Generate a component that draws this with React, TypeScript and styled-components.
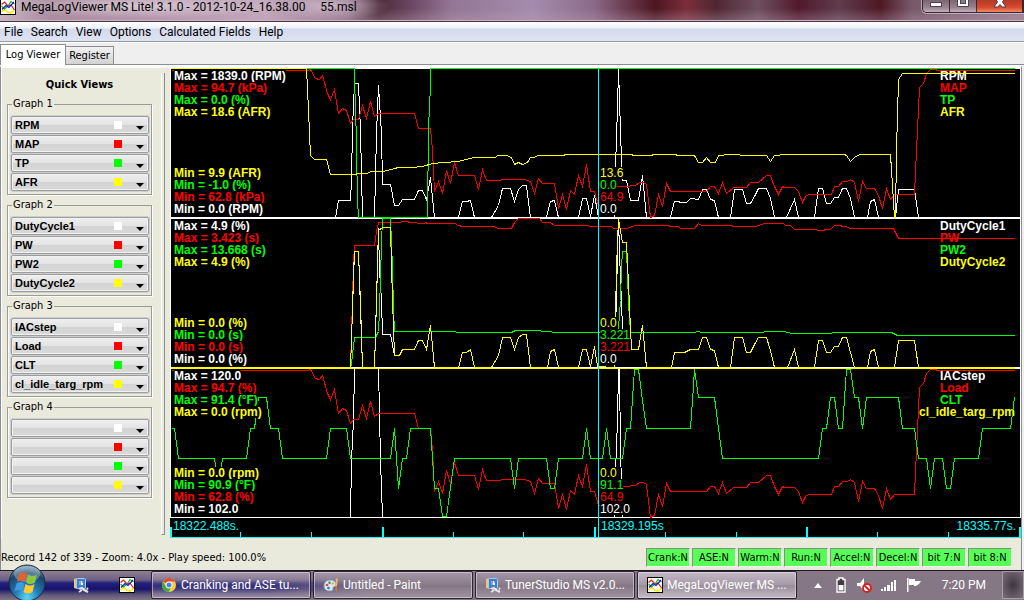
import React from 'react';
import styled, { createGlobalStyle } from 'styled-components';

const WHITE = '#ffffff';
const RED = '#ff0000';
const GREEN = '#00ff00';
const YELLOW = '#ffff00';
const CYAN = '#00ffff';
const PANEL = '#e9e9dc';
const UI_FONT = 'Roboto, "Open Sans", sans-serif';
const DIALOG_FONT = '"DejaVu Sans Condensed", "DejaVu Sans", sans-serif';
const PLOT_FONT = '"Liberation Sans", Arial, sans-serif';

const GlobalStyle = createGlobalStyle`
  * { box-sizing: border-box; }
  body { margin: 0; background: #efefef; }
  button, select { font: inherit; color: inherit; }
`;

/* ---------- log data ---------- */

interface Series {
  name: string;
  color: string;
  max: string;
  min: string;
  value: string;
  points: string;
  shift?: number;
}

interface GraphData {
  id: string;
  top: number;
  series: Series[];
}

const manifold =
  '171,70 307,70 310,69 315,78 319,79 322,75 327,93 330,99 334,89 338,113 342,108 346,110 350,123 353,119 358,119 362,105 366,118 370,101 374,116 378,113 414,113 418,128 430,128 432,150 434,191 438,181 442,193 446,170 450,183 454,162 458,175 474,175 478,189 482,169 486,180 500,180 501,179 524,179 530,181 534,193 538,178 542,183 554,183 558,208 562,194 566,209 570,190 574,194 578,175 582,186 586,164 590,191 594,191 598,205 602,205 610,186 625,186 635,185 639,182 643,182 646,184 650,217 654,215 658,194 662,206 666,183 670,191 706,191 710,186 714,186 718,193 722,182 726,193 733,187 746,187 750,182 758,182 766,175 770,175 774,186 778,194 782,186 784,187 794,187 798,191 802,202 805,196 808,194 831,194 834,186 838,186 842,181 847,181 850,179 854,182 858,201 862,181 866,188 874,188 878,195 882,208 886,188 890,199 894,194 914,194 916,150 919,87 923,83 926,73 930,69 935,69 937,70 1014,70';

const rpm =
  '335,217 338,200 350,200 351,180 352,127 354,83 358,83 360,130 362,217 374,217 376,133 378,85 381,133 382,184 390,184 394,205 398,205 402,199 414,199 418,190 422,190 426,199 430,177 434,217 458,217 462,201 466,201 470,200 474,217 491,217 498,205 502,188 510,188 514,201 518,189 522,185 526,185 530,217 546,217 550,201 554,200 558,217 578,217 582,198 586,198 590,216 594,195 597,211 598,217 614,217 615,167 617,107 618,69 619,100 621,160 622,180 626,180 630,200 638,200 642,175 646,217 670,217 674,201 678,201 680,202 686,202 690,198 698,199 702,189 706,189 710,199 714,200 718,217 730,217 734,189 742,189 746,203 750,203 754,196 758,188 766,188 770,198 774,217 786,217 794,199 798,217 814,217 818,188 822,188 826,203 830,203 834,197 838,197 842,188 846,188 850,198 854,217 867,217 870,201 874,199 878,217 895,217 898,189 914,189 918,217';

const throttle = '171,68 354,68 354,86 355,100 357,200 358,217 427,217 428,127 430,86 430,68 1014,68';

const afr =
  '171,68 306,68 307,88 310,155 314,159 326,159 330,174 355,174 357,173 367,173 370,171 382,171 395,168 397,167 411,167 422,166 432,163 444,162 458,161 473,157 495,157 497,155 506,155 511,157 514,164 518,162 522,164 527,162 530,157 534,157 537,155 563,155 565,154 631,154 633,155 651,155 653,154 675,154 677,155 694,155 698,162 702,162 706,157 710,162 715,162 718,155 723,155 724,154 739,154 740,155 766,155 770,161 774,155 779,155 780,154 844,154 846,155 850,161 855,156 860,154 890,154 894,217 895,217 896,150 898,79 902,73 1014,73';

const pw =
  '350,367 351,333 352,300 353,263 354,245 374,245 376,231 378,222 400,222 401,221 407,221 409,222 416,222 417,223 424,223 425,222 427,223 455,223 457,225 463,226 494,226 497,228 511,228 514,222 518,218 539,218 542,222 550,222 554,225 588,225 589,226 611,226 613,228 626,228 629,227 635,225 668,225 670,226 678,226 680,228 694,228 698,223 701,225 731,225 733,226 755,226 764,223 783,223 785,225 790,225 794,229 816,229 817,230 823,230 825,229 830,229 834,225 840,225 842,226 846,226 849,228 893,228 898,238 1014,238';

const pw2 =
  '350,367 351,363 354,337 375,337 378,331 379,310 380,277 381,243 382,218 390,218 392,267 393,310 394,331 455,331 456,332 511,332 515,330 540,330 541,331 551,331 552,332 618,332 618,328 620,300 621,267 622,251 626,251 627,273 628,303 630,332 695,332 696,331 699,331 700,332 763,332 764,331 783,331 792,333 831,333 832,332 891,332 897,335 1014,335';

const duty1 =
  '350,367 354,251 358,251 362,367 374,367 378,228 379,270 381,300 382,334 390,334 394,355 399,355 402,349 414,349 418,340 422,340 426,349 430,325 434,367 614,367 618,218 619,250 620,280 621,300 622,330 626,349';

const duty2 =
  '171,367 350,367 352,310 353,273 354,251 358,251 360,303 362,367 374,367 376,300 378,230 382,227 390,227 392,300 394,355 399,355 402,349 414,349 418,340 422,340 426,349 430,325 434,367 458,367 462,352 466,352 470,349 474,367 491,367 498,355 502,337 510,337 514,349 518,337 522,334 526,334 530,367 547,367 550,351 554,349 558,367 578,367 582,349 586,349 590,366 594,346 597,366 614,367 615,316 616,267 618,218 620,230 622,242 626,242 628,283 630,328 631,349 638,349 642,325 646,367 671,367 674,352 684,352 690,349 698,349 702,337 706,337 710,349 714,350 718,367 730,367 734,337 742,337 746,352 750,352 754,344 758,337 766,337 770,350 774,367 787,367 794,349 798,367 814,367 818,340 822,340 826,352 830,352 834,346 838,346 842,337 846,337 850,352 854,367 867,367 870,351 874,349 878,367 894,367 898,340 914,340 918,367 1014,367';

const iac =
  '350,517 351,460 353,420 354,369 354,368 378,368 379,413 380,460 382,517 614,517 615,471 617,420 618,369 619,369 620,450 621,483 622,517';

const clt =
  '171,428 174,428 178,458 214,458 218,488 222,458 246,458 250,428 254,428 258,397 266,397 270,428 278,428 282,458 326,458 330,428 346,428 350,458 390,458 394,428 398,488 402,458 406,458 410,428 430,428 434,488 438,488 442,516 446,516 454,458 510,458 514,488 518,458 546,458 550,488 554,488 558,458 582,458 586,428 590,458 602,458 606,428 610,458 622,458 626,428 630,428 634,369 638,369 642,400 646,428 690,428 692,400 694,369 698,397 714,397 718,428 722,458 818,458 822,428 826,428 830,397 834,397 838,428 842,428 846,369 850,369 854,397 858,397 862,428 866,397 898,397 902,428 914,428 918,458 926,458 930,488 934,458 942,458 946,488 950,488 954,458 978,458 982,428 1010,428 1014,397';

const graphs: GraphData[] = [
  {
    id: 'Graph 1',
    top: 68,
    series: [
      { name: 'RPM', color: WHITE, max: '1839.0 (RPM)', min: '0.0 (RPM)', value: '0.0', points: rpm },
      { name: 'MAP', color: RED, max: '94.7 (kPa)', min: '62.8 (kPa)', value: '64.9', points: manifold },
      { name: 'TP', color: GREEN, max: '0.0 (%)', min: '-1.0 (%)', value: '0.0', points: throttle },
      { name: 'AFR', color: YELLOW, max: '18.6 (AFR)', min: '9.9 (AFR)', value: '13.6', points: afr },
    ],
  },
  {
    id: 'Graph 2',
    top: 218,
    series: [
      { name: 'DutyCycle1', color: WHITE, max: '4.9 (%)', min: '0.0 (%)', value: '0.0', points: duty1 },
      { name: 'PW', color: RED, max: '3.423 (s)', min: '0.0 (s)', value: '3.221', points: pw },
      { name: 'PW2', color: GREEN, max: '13.668 (s)', min: '0.0 (s)', value: '3.221', points: pw2 },
      { name: 'DutyCycle2', color: YELLOW, max: '4.9 (%)', min: '0.0 (%)', value: '0.0', points: duty2 },
    ],
  },
  {
    id: 'Graph 3',
    top: 368,
    series: [
      { name: 'IACstep', color: WHITE, max: '120.0', min: '102.0', value: '102.0', points: iac },
      { name: 'Load', color: RED, max: '94.7 (%)', min: '62.8 (%)', value: '64.9', points: manifold, shift: 300 },
      { name: 'CLT', color: GREEN, max: '91.4 (°F)', min: '90.9 (°F)', value: '91.1', points: clt },
      { name: 'cl_idle_targ_rpm', color: YELLOW, max: '0.0 (rpm)', min: '0.0 (rpm)', value: '0.0', points: '171,368 1014,368' },
    ],
  },
];

const quickViews = [
  ...graphs.map((g) => ({ title: g.id, fields: g.series.map((s) => s.name) })),
  { title: 'Graph 4', fields: ['', '', '', ''] },
];

const swatches = [WHITE, RED, GREEN, YELLOW];
const menus = ['File', 'Search', 'View', 'Options', 'Calculated Fields', 'Help'];
const flags = ['Crank:N', 'ASE:N', 'Warm:N', 'Run:N', 'Accel:N', 'Decel:N', 'bit 7:N', 'bit 8:N'];

/* ---------- window frame ---------- */

const Desktop = styled.div`
  display: flex;
  flex-direction: column;
  min-height: 100vh;
  min-width: 900px;
  font-family: ${UI_FONT};
  font-size: 12px;
  color: #000;
`;

const TitleBar = styled.header`
  display: flex;
  align-items: flex-start;
  height: 22px;
  overflow: hidden;
  border-bottom: 1px solid #4a3440;
  box-shadow: inset 0 -1px 0 #c9b4c4;
  background:
    radial-gradient(ellipse 150px 12px at 140px 6px, rgba(222, 208, 220, 0.85), rgba(222, 208, 220, 0) 100%),
    radial-gradient(ellipse 60px 14px at 330px 6px, rgba(215, 195, 212, 0.8), rgba(215, 195, 212, 0) 100%),
    linear-gradient(180deg, rgba(40, 20, 30, 0) 40%, rgba(190, 160, 180, 0.35) 100%),
    linear-gradient(
      90deg,
      #c9bcc9 0,
      #a58598 5%,
      #b294a8 14%,
      #c3a9bd 26%,
      #8d6f84 34%,
      #4c2b38 37%,
      #6a4560 40%,
      #937594 44%,
      #a48cae 52%,
      #8b6a88 58%,
      #6b3d50 61%,
      #4b1621 64%,
      #7a2e3a 67%,
      #4f2732 70%,
      #6e5060 74%,
      #511a2b 78%,
      #5f3c4d 82%,
      #4e1825 86%,
      #775868 89%,
      #8a7080 95%,
      #9b8090 100%
    );
`;

const AppIconSlot = styled.span`
  width: 16px;
  height: 15px;
  overflow: hidden;
  display: flex;
  align-items: flex-end;
`;

const TitleText = styled.h1`
  margin: 0;
  padding-left: 5px;
  flex: 1;
  font-size: 12px;
  line-height: 14px;
  font-weight: 400;
  white-space: pre;
`;

const CaptionButtons = styled.div`
  display: flex;
  width: 102px;
  height: 13px;
  overflow: hidden;
  border: 1px solid #3a2630;
  border-top: 0;
  border-radius: 0 0 0 5px;
  box-shadow: 0 0 0 1px rgba(255, 255, 255, 0.45);
`;

const CaptionButton = styled.button<{ $close?: boolean }>`
  display: flex;
  align-items: flex-start;
  justify-content: center;
  flex: ${(p) => (p.$close ? '0 0 46px' : '1')};
  padding: 0;
  border: 0;
  border-right: 1px solid rgba(40, 20, 30, 0.8);
  background: ${(p) =>
    p.$close ? 'linear-gradient(#b13a28, #d8492c 60%, #f08a6c)' : 'linear-gradient(#7d6672, #97818d 60%, #c1b0ba)'};
`;

const MenuBar = styled.nav`
  display: flex;
  align-items: center;
  gap: 8px;
  height: 20px;
  padding-left: 4px;
  border-bottom: 1px solid #97989c;
  background: linear-gradient(#ffffff, #eef1f8 6px, #d3daec 7px, #dde3f2);
`;

const MenuButton = styled.button`
  padding: 0;
  border: 0;
  background: none;
  line-height: 16px;
`;

const TabStrip = styled.div`
  display: flex;
  align-items: flex-end;
  height: 23px;
  border-top: 1px solid #fff;
  border-bottom: 1px solid #8a8d96;
  background: #efefef;
`;

const Tab = styled.button<{ $active?: boolean }>`
  height: ${(p) => (p.$active ? 21 : 18)}px;
  margin-bottom: ${(p) => (p.$active ? -1 : 0)}px;
  width: ${(p) => (p.$active ? 66 : 48)}px;
  padding: 0;
  text-align: center;
  font-family: ${DIALOG_FONT};
  font-size: 11px;
  line-height: 16px;
  border: 1px solid #8a8d96;
  border-bottom: 0;
  border-left-width: ${(p) => (p.$active ? 1 : 0)}px;
  background: ${(p) => (p.$active ? '#fff' : 'linear-gradient(#f3f3f3, #e3e3e3 45%, #d2d2d2)')};
`;

const Pane = styled.main`
  flex: 1;
  display: flex;
  flex-direction: column;
  margin-right: 2px;
  border: solid #fff;
  border-width: 3px 0 0 1px;
  border-left-color: #8a8d96;
  border-right: 1px solid #8a8d96;
  background: ${PANEL};
`;

const Workspace = styled.div`
  display: flex;
  flex: 1;
  border-left: 1px solid #fff;
`;

/* ---------- quick view sidebar ---------- */

const Sidebar = styled.aside`
  display: flex;
  flex-direction: column;
  gap: 4px;
  width: 159px;
  padding: 10px 9px 0 5px;
`;

const SidebarTitle = styled.h2`
  margin: 0 0 2px;
  font-family: ${DIALOG_FONT};
  font-size: 11px;
  line-height: 14px;
  font-weight: 700;
  text-align: center;
`;

const Group = styled.fieldset`
  margin: 0;
  padding: 6px 2px 3px 3px;
  min-width: 0;
  display: flex;
  flex-direction: column;
  gap: 1px;
  border: 1px solid #9a9b95;
  box-shadow: 1px 1px 0 #fff, inset 1px 0 0 #fff;
`;

const GroupTitle = styled.legend`
  padding: 0 1px;
  margin-left: 1px;
  font-family: ${DIALOG_FONT};
  font-size: 11px;
  line-height: 12px;
`;

const Combo = styled.div`
  position: relative;
  height: 18px;
`;

const ComboSelect = styled.select`
  appearance: none;
  display: block;
  width: 100%;
  height: 18px;
  padding: 0 3px;
  border: 1px solid #9c9da1;
  border-radius: 2px;
  box-shadow: inset 0 0 0 1px #f1f1f1, 0 0 0 1px #cfcfca;
  background: linear-gradient(#eeeeee, #e3e3e3 50%, #d3d3d3 51%, #d9d9d9);
  font-family: ${PLOT_FONT};
  font-size: 11px;
  line-height: 14px;
  font-weight: 700;
`;

const Swatch = styled.i<{ $color: string }>`
  position: absolute;
  top: 5px;
  right: 27px;
  width: 8px;
  height: 8px;
  pointer-events: none;
  background: ${(p) => p.$color};
`;

const Arrow = styled.i`
  position: absolute;
  top: 10px;
  right: 5px;
  border: 4px solid transparent;
  border-top-color: #000;
  border-bottom: 0;
  pointer-events: none;
`;

const Divider = styled.div`
  width: 4px;
  margin: 5px 5px 3px 0;
  border-left: 1px solid #fff;
  border-right: 1px solid #8a8d96;
  border-bottom: 1px solid #8a8d96;
`;

/* ---------- log graphs ---------- */

const Charts = styled.section`
  position: relative;
  flex: 1;
  min-width: 0;
  font-family: ${PLOT_FONT};
  line-height: 12px;
`;

const GraphBox = styled.div`
  position: relative;
  height: 150px;
  border: 1px solid #fff;
  background: #000;
`;

const Trace = styled.svg`
  position: absolute;
  top: -1px;
  left: -1px;
  width: calc(100% + 2px);
  height: 150px;
`;

const Readout = styled.div<{ $edge: 'top' | 'bottom' }>`
  position: absolute;
  left: 3px;
  ${(p) => (p.$edge === 'top' ? 'top: 1px' : 'bottom: 2px')};
  display: flex;
  flex-direction: ${(p) => (p.$edge === 'top' ? 'column' : 'column-reverse')};
  align-items: flex-start;
  font-weight: 700;
`;

const CursorReadout = styled.div`
  position: absolute;
  left: calc(50.29% + 2px);
  bottom: 2px;
  display: flex;
  flex-direction: column-reverse;
  align-items: flex-start;
`;

const Line = styled.span<{ $color: string }>`
  color: ${(p) => p.$color};
  background: #000;
  white-space: nowrap;
`;

const Legend = styled.div`
  position: absolute;
  top: 1px;
  right: 5px;
  display: flex;
  flex-direction: column;
  align-items: flex-end;
  font-weight: 700;
`;

const LegendItem = styled.span<{ $color: string }>`
  min-width: 75px;
  color: ${(p) => p.$color};
`;

const CursorLine = styled.div`
  position: absolute;
  top: 1px;
  bottom: 0;
  left: 50.29%;
  width: 1px;
  background: ${CYAN};
`;

const TimeAxis = styled.div`
  position: relative;
  height: 20px;
  color: ${CYAN};
  background: #000;
`;

const Ticks = styled.svg`
  display: block;
  width: 100%;
  height: 20px;
`;

const TimeLabel = styled.span<{ $at: 'start' | 'cursor' | 'end' }>`
  position: absolute;
  top: 2px;
  ${(p) => (p.$at === 'end' ? 'right: 5px' : p.$at === 'start' ? 'left: 3px' : 'left: calc(50.29% + 3px)')};
`;

/* ---------- status ---------- */

const StatusBar = styled.footer`
  display: flex;
  align-items: center;
  justify-content: space-between;
  height: 32px;
  padding: 6px 9px 0 0;
  font-family: ${DIALOG_FONT};
  font-size: 11px;
`;

const FlagList = styled.div`
  display: flex;
  gap: 2px;
`;

const FlagBox = styled.span`
  width: 44px;
  height: 19px;
  border: 1px solid #8b8b83;
  border-right-color: #f4f4ee;
  border-bottom-color: #f4f4ee;
  background: #55ff55;
  font-size: 11px;
  line-height: 18px;
  text-align: center;
  white-space: nowrap;
`;

/* ---------- taskbar ---------- */

const Taskbar = styled.div`
  position: relative;
  display: flex;
  align-items: stretch;
  height: 30px;
  padding: 0 0 1px;
  border-top: 1px solid #1d1722;
  color: #fff;
  background:
    linear-gradient(90deg, rgba(128, 112, 128, 0) 26%, #857785 36%),
    linear-gradient(#8d8090, #6e6285 30%, #23217c 42%, #14126c 62%, #5e5675 82%, #80748a);
`;

const StartButton = styled.button`
  width: 56px;
  padding: 0;
  border: 0;
  background: none;
`;

const Orb = styled.svg`
  position: absolute;
  left: 8px;
  bottom: 0;
  width: 38px;
  height: 36px;
`;

const QuickLaunch = styled.div`
  display: flex;
  align-items: center;
  gap: 30px;
  width: 95px;
  padding-left: 17px;
`;

const PlainButton = styled.button`
  display: flex;
  justify-content: center;
  min-width: 16px;
  padding: 0;
  border: 0;
  background: none;
`;

const TaskButtons = styled.div`
  display: flex;
  flex: 1;
  gap: 2px;
`;

const TaskButton = styled.button<{ $active?: boolean }>`
  display: flex;
  align-items: center;
  gap: 4px;
  width: 160px;
  padding: 0 0 1px 9px;
  border: 1px solid #2c2433;
  border-radius: 2px;
  box-shadow: inset 0 0 0 1px rgba(235, 225, 240, 0.55);
  background: ${(p) =>
    p.$active
      ? 'linear-gradient(#c3b8c5, #a89ba9 48%, #9a8d9b 52%, #c4bac5)'
      : 'linear-gradient(rgba(185, 172, 190, 0.6), rgba(150, 136, 152, 0.25) 48%, rgba(130, 115, 132, 0.25) 52%, rgba(180, 165, 182, 0.6))'};
  white-space: nowrap;
`;

const Tray = styled.div`
  display: flex;
  align-items: center;
  gap: 9px;
`;

const Clock = styled.time`
  padding: 0 7px 0 11px;
`;

const ShowDesktop = styled.button`
  align-self: stretch;
  width: 22px;
  border: 1px solid #a89ba8;
  background: radial-gradient(#3f3540, #7a6e7b);
`;

/* ---------- icons ---------- */

const LogIcon = () => (
  <svg width="16" height="16" viewBox="0 0 16 16" aria-hidden="true">
    <rect x=".5" y=".5" width="15" height="15" fill="#fff" stroke="#000" />
    <g fill="none" strokeWidth="1.2">
      <path d="M1.500 13l3-2.500 3 2.500 3.500 1 3.500-3" stroke="#f5ee00" strokeWidth="1.600" />
      <path d="M1.500 5.500l3-2.500 3.500 4 3-1 3.500 5" stroke="#f01818" />
      <path d="M1.500 7l3 3 3.500-3 3-4.500 3.500 2.500" stroke="#18b418" />
      <path d="M2 10.500l4-4 3 2 5-5.500" stroke="#1818e0" />
    </g>
  </svg>
);

const TunerIcon = () => (
  <svg width="16" height="16" viewBox="0 0 16 16" aria-hidden="true">
    <path d="M1 2l3-1v11l-3-1z" fill="#e8c878" />
    <rect x="3.500" y="1.500" width="9" height="10" rx="1" fill="#3b7fd0" stroke="#a9c9ee" />
    <rect x="6" y="4" width="4" height="4" fill="#e8f2fc" />
    <path d="M7 4v4M9 5h1" stroke="#2458a0" />
    <path d="M6 12l3-1 2 2 3-1 1-1M6 15l3-2M11 13l4 2" stroke="#e6e6ea" strokeWidth="2" fill="none" />
    <path d="M5 13h2M13 11v2" stroke="#555" />
  </svg>
);

const ChromeIcon = () => (
  <svg width="16" height="16" viewBox="0 0 16 16" aria-hidden="true">
    <circle cx="8" cy="8" r="7" fill="#f7cf3c" />
    <path d="M8 8L1.900 4.500A7 7 0 0 1 14.100 4.500L8 4.500z" fill="#dd4b3a" />
    <path d="M1.900 4.500A7 7 0 0 0 7.500 15L10.500 10 5 9.500z" fill="#3faa4d" />
    <circle cx="8" cy="8" r="3.400" fill="#fff" />
    <circle cx="8" cy="8" r="2.500" fill="#4a86d8" />
  </svg>
);

const PaintIcon = () => (
  <svg width="16" height="16" viewBox="0 0 16 16" aria-hidden="true">
    <path d="M1 9c0-4 3-6 6-6 4 0 6 2 6 5 0 2-3 1-3 3 0 2 0 3-3 3-4 0-6-2-6-5z" fill="#dbe8f4" stroke="#7f9ab8" />
    <circle cx="4" cy="8" r="1.300" fill="#d84a3a" />
    <circle cx="6.500" cy="5.800" r="1.300" fill="#3c9a4a" />
    <circle cx="9.800" cy="6.500" r="1.300" fill="#e8b030" />
    <circle cx="5.500" cy="11" r="1.300" fill="#3a70c8" />
    <path d="M13 1l2 1-1 7h-2z" fill="#f0b468" />
    <path d="M12 9h2v6h-1z" fill="#d07a28" />
  </svg>
);

const StartOrb = () => (
  <Orb viewBox="0 0 38 36" aria-hidden="true">
    <defs>
      <radialGradient id="orb" cx=".5" cy=".9" r=".85">
        <stop offset="0" stopColor="#5fd8f8" />
        <stop offset=".4" stopColor="#1f7ab4" />
        <stop offset=".8" stopColor="#1d4468" />
        <stop offset="1" stopColor="#7d9ab0" />
      </radialGradient>
    </defs>
    <circle cx="19" cy="19" r="18" fill="url(#orb)" stroke="#1b2b40" />
    <ellipse cx="19" cy="10" rx="13" ry="8" fill="#cfe2ee" opacity=".35" />
    <path d="M11 10c3-2 5-2 8 0l-2 8c-3-2-5-2-8 0z" fill="#e8602c" />
    <path d="M20 10.500c3 2 6 2 9 0l-2 8c-3 2-6 2-9 0z" fill="#8cc63e" />
    <path d="M8.500 19.500c3-2 5-2 8 0l-2 8c-3-2-5-2-8 0z" fill="#3d9ade" />
    <path d="M17.500 20c3 2 6 2 9 0l-2 8c-3 2-6 2-9 0z" fill="#fcc931" />
  </Orb>
);

const BatteryIcon = () => (
  <svg width="12" height="16" viewBox="-1 0 12 16" aria-hidden="true">
    <path d="M3 1h4v1.500h2v12.500H1V2.500h2z" fill="#443a46" stroke="#fff" strokeWidth="1.400" />
    <path d="M2.500 8h5v5.500h-5z" fill="#fff" />
  </svg>
);

const MutedIcon = () => (
  <svg width="16" height="16" viewBox="0 0 16 16" aria-hidden="true">
    <path d="M1 6h3l4-5v13l-4-5H1z" fill="#fff" />
    <circle cx="11" cy="11" r="4" fill="#fff" stroke="#d81e1e" strokeWidth="1.800" />
    <path d="M8.500 8.500l5 5" stroke="#d81e1e" strokeWidth="1.800" />
  </svg>
);

const SignalIcon = () => (
  <svg width="16" height="14" viewBox="0 0 16 14" aria-hidden="true">
    <path d="M0 11h2v2H0zM3 9h2v4H3zM6 7h3v6H6zM10 4h2v9h-2zM13 2h2v11h-2z" fill="#fff" />
  </svg>
);

const FlagIcon = () => (
  <svg width="16" height="16" viewBox="0 0 16 16" aria-hidden="true">
    <path d="M1 1h1.500v14H1z" fill="#fff" />
    <path d="M3 2h6v2h6l-2 3-3 2H8V8H3z" fill="#fff" />
  </svg>
);

/* ---------- views ---------- */

const LogGraph = ({ graph }: { graph: GraphData }) => (
  <GraphBox>
    <Legend>
      {graph.series.map((s) => (
        <LegendItem key={s.name} $color={s.color}>
          {s.name}
        </LegendItem>
      ))}
    </Legend>
    <Trace viewBox={`169.5 ${graph.top - 0.5} 851 150`} preserveAspectRatio="none" role="img" aria-label={graph.id}>
      {graph.series.map((s) => (
        <polyline
          key={s.name}
          points={s.points}
          transform={s.shift ? `translate(0 ${s.shift})` : undefined}
          fill="none"
          stroke={s.color}
          shapeRendering="crispEdges"
          vectorEffect="non-scaling-stroke"
        />
      ))}
    </Trace>
    <Readout $edge="top">
      {graph.series.map((s) => (
        <Line key={s.name} $color={s.color}>
          Max = {s.max}
        </Line>
      ))}
    </Readout>
    <Readout $edge="bottom">
      {graph.series.map((s) => (
        <Line key={s.name} $color={s.color}>
          Min = {s.min}
        </Line>
      ))}
    </Readout>
    <CursorReadout>
      {graph.series.map((s) => (
        <Line key={s.name} $color={s.color}>
          {s.value}
        </Line>
      ))}
    </CursorReadout>
  </GraphBox>
);

const minorTicks = [70, 141, 283, 353, 495, 566, 707, 778];
const majorTicks = [0, 212, 424, 636, 849];

const App = () => (
  <Desktop>
    <GlobalStyle />
    <TitleBar>
      <AppIconSlot>
        <LogIcon />
      </AppIconSlot>
      <TitleText>{'MegaLogViewer MS Lite! 3.1.0 - 2012-10-24_16.38.00     55.msl'}</TitleText>
      <CaptionButtons>
        <CaptionButton aria-label="Minimize">
          <svg width="12" height="8" viewBox="0 0 12 8">
            <rect x=".5" y="2.500" width="11" height="4" fill="#fff" stroke="#4a4450" />
          </svg>
        </CaptionButton>
        <CaptionButton aria-label="Maximize">
          <svg width="12" height="8" viewBox="0 0 12 8">
            <path d="M.5-3h11v9.500H.5z" fill="#fff" stroke="#4a4450" />
            <rect x="3.500" y="-1" width="5" height="4.500" fill="#8a7884" stroke="#4a4450" />
          </svg>
        </CaptionButton>
        <CaptionButton $close aria-label="Close">
          <svg width="14" height="8" viewBox="0 0 14 8">
            <path d="M1 7l3.500-5L2-2h10L9.500 2 13 7H9L7 4.500 5 7z" fill="#fff" stroke="#4a3440" />
          </svg>
        </CaptionButton>
      </CaptionButtons>
    </TitleBar>
    <MenuBar>
      {menus.map((m) => (
        <MenuButton key={m}>{m}</MenuButton>
      ))}
    </MenuBar>
    <TabStrip role="tablist">
      <Tab $active role="tab" aria-selected="true">
        Log Viewer
      </Tab>
      <Tab role="tab" aria-selected="false">
        Register
      </Tab>
    </TabStrip>
    <Pane>
      <Workspace>
        <Sidebar>
          <SidebarTitle>Quick Views</SidebarTitle>
          {quickViews.map((view) => (
            <Group key={view.title}>
              <GroupTitle>{view.title}</GroupTitle>
              {view.fields.map((field, i) => (
                <Combo key={i}>
                  <ComboSelect aria-label={`${view.title} field ${i + 1}`} defaultValue={field}>
                    <option value={field}>{field}</option>
                  </ComboSelect>
                  <Swatch $color={swatches[i]} />
                  <Arrow />
                </Combo>
              ))}
            </Group>
          ))}
        </Sidebar>
        <Divider />
        <Charts>
          {graphs.map((g) => (
            <LogGraph key={g.id} graph={g} />
          ))}
          <TimeAxis>
            <Ticks viewBox="0 0 851 20" preserveAspectRatio="none" aria-hidden="true">
              <g fill={CYAN} shapeRendering="crispEdges">
                <rect x="0" y="19" width="851" height="1" />
                {minorTicks.map((x) => (
                  <rect key={x} x={x} y="14" width="1" height="5" />
                ))}
                {majorTicks.map((x) => (
                  <rect key={x} x={x} y="9" width="2" height="10" />
                ))}
              </g>
            </Ticks>
            <TimeLabel $at="start">18322.488s.</TimeLabel>
            <TimeLabel $at="cursor">18329.195s</TimeLabel>
            <TimeLabel $at="end">18335.77s.</TimeLabel>
          </TimeAxis>
          <CursorLine />
        </Charts>
      </Workspace>
      <StatusBar>
        <span>Record 142 of 339 - Zoom: 4.0x - Play speed: 100.0%</span>
        <FlagList>
          {flags.map((f) => (
            <FlagBox key={f}>{f}</FlagBox>
          ))}
        </FlagList>
      </StatusBar>
    </Pane>
    <Taskbar>
      <StartButton aria-label="Start">
        <StartOrb />
      </StartButton>
      <QuickLaunch>
        <PlainButton aria-label="TunerStudio">
          <TunerIcon />
        </PlainButton>
        <PlainButton aria-label="MegaLogViewer">
          <LogIcon />
        </PlainButton>
      </QuickLaunch>
      <TaskButtons>
        <TaskButton>
          <ChromeIcon />
          Cranking and ASE tu...
        </TaskButton>
        <TaskButton>
          <PaintIcon />
          Untitled - Paint
        </TaskButton>
        <TaskButton>
          <TunerIcon />
          TunerStudio MS v2.0...
        </TaskButton>
        <TaskButton $active>
          <LogIcon />
          MegaLogViewer MS ...
        </TaskButton>
      </TaskButtons>
      <Tray>
        <PlainButton aria-label="Show hidden icons">
          <svg width="8" height="5" viewBox="0 0 8 5">
            <path d="M0 5l4-5 4 5z" fill="#fff" />
          </svg>
        </PlainButton>
        <BatteryIcon />
        <MutedIcon />
        <SignalIcon />
        <FlagIcon />
        <Clock>7:20 PM</Clock>
        <ShowDesktop aria-label="Show desktop" />
      </Tray>
    </Taskbar>
  </Desktop>
);

export default App;
